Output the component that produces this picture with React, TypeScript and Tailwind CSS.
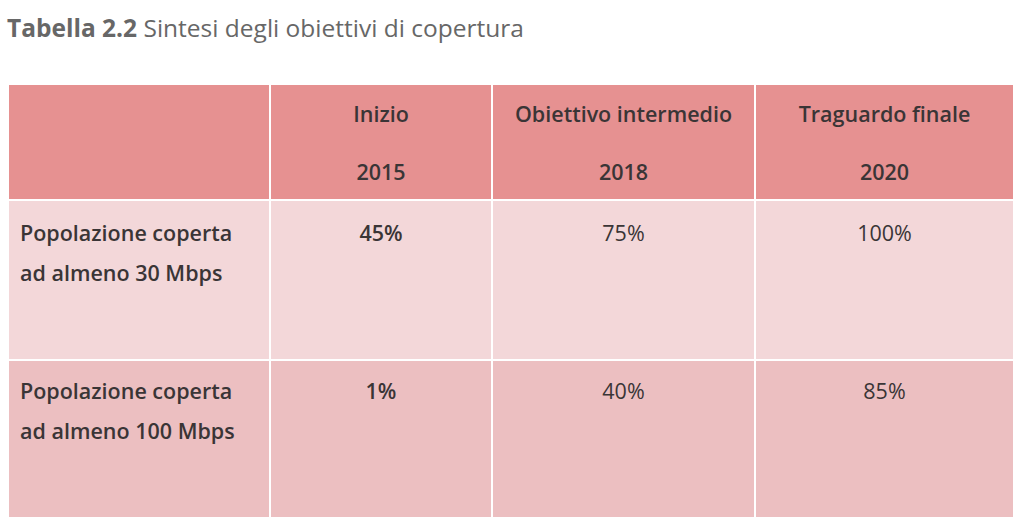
import React from "react";

export default function App() {
  return (
    <div className="w-[1024px] h-[532px] bg-white overflow-hidden font-['Open_Sans',sans-serif]">
      <div className="pl-[7px] pt-[11px] h-[85px] text-[24.5px] leading-[34px] text-[#676767]">
        <span className="font-bold">Tabella 2.2</span> <span>Sintesi degli obiettivi di copertura</span>
      </div>
      <div className="ml-[9px] w-[1004px] grid grid-cols-[260px_220px_261px_257px] grid-rows-[114px_158px_156px] gap-[2px] text-[21.5px] text-[#3a3536]">
        <div className="bg-[#e69191]"></div>
        <div className="bg-[#e69191] flex flex-col items-center pt-[9px] font-semibold">
          <div className="leading-[40px]">Inizio</div>
          <div className="leading-[40px] mt-[18px]">2015</div>
        </div>
        <div className="bg-[#e69191] flex flex-col items-center pt-[9px] font-semibold">
          <div className="leading-[40px]">Obiettivo intermedio</div>
          <div className="leading-[40px] mt-[18px]">2018</div>
        </div>
        <div className="bg-[#e69191] flex flex-col items-center pt-[9px] font-semibold">
          <div className="leading-[40px]">Traguardo finale</div>
          <div className="leading-[40px] mt-[18px]">2020</div>
        </div>

        <div className="bg-[#f3d7d9] pl-[11px] pt-[12px] font-semibold leading-[40px]">
          Popolazione coperta<br />ad almeno 30 Mbps
        </div>
        <div className="bg-[#f3d7d9] pt-[12px] text-center font-semibold leading-[40px]">45%</div>
        <div className="bg-[#f3d7d9] pt-[12px] text-center leading-[40px]">75%</div>
        <div className="bg-[#f3d7d9] pt-[12px] text-center leading-[40px]">100%</div>

        <div className="bg-[#ecbfc1] pl-[11px] pt-[10px] font-semibold leading-[40px]">
          Popolazione coperta<br />ad almeno 100 Mbps
        </div>
        <div className="bg-[#ecbfc1] pt-[10px] text-center font-semibold leading-[40px]">1%</div>
        <div className="bg-[#ecbfc1] pt-[10px] text-center leading-[40px]">40%</div>
        <div className="bg-[#ecbfc1] pt-[10px] text-center leading-[40px]">85%</div>
      </div>
    </div>
  );
}
